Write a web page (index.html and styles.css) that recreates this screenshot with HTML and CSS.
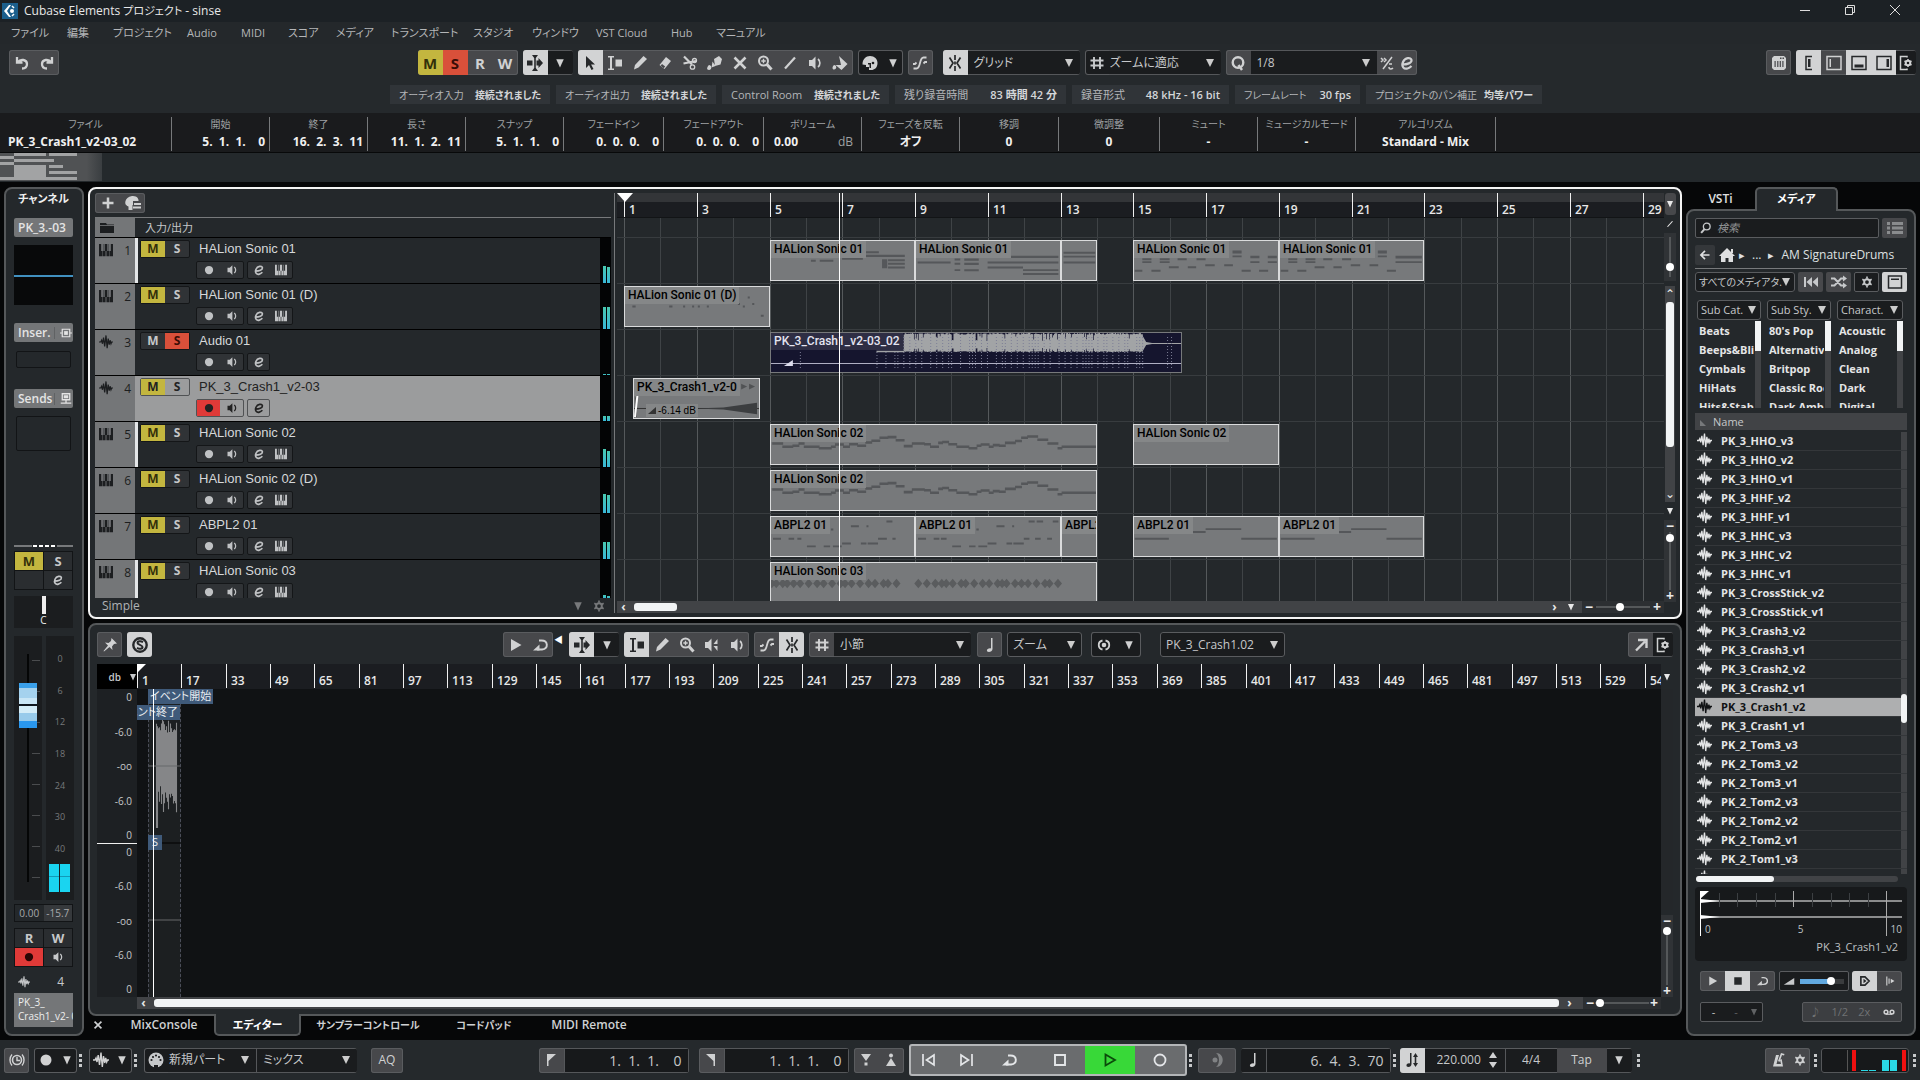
FILE: index.html
```html
<!DOCTYPE html>
<html lang="ja">
<head>
    <meta charset="UTF-8">
    <meta name="viewport" content="width=device-width, initial-scale=1.0">
    <title>Cubase Elements プロジェクト - sinse</title>
    <link rel="stylesheet" href="styles.css">
</head>
<body>
    <!-- Icon sprite -->
    <svg class="sprite" aria-hidden="true">
        <symbol id="i-logo" viewBox="0 0 16 16"><rect width="16" height="16" fill="#1c5f8c"/><path d="M7 2 2 8l5 6h2L5 8l4-6z" fill="#fff"/><circle cx="10" cy="8" r="2" fill="#fff"/><path d="M10 3l2 2M10 13l2-2" stroke="#fff" stroke-width="1.500"/></symbol>
        <symbol id="i-undo" viewBox="0 0 16 16"><path d="M3 2v5.500h5.500M4 7C6.500 3.500 13 4.500 13 9c0 3-2 4.500-5 4.500" fill="none" stroke="currentColor" stroke-width="2.300"/></symbol>
        <symbol id="i-redo" viewBox="0 0 16 16"><path d="M13 2v5.500H7.500M12 7C9.500 3.500 3 4.500 3 9c0 3 2 4.500 5 4.500" fill="none" stroke="currentColor" stroke-width="2.300"/></symbol>
        <symbol id="i-auto" viewBox="0 0 16 16"><path d="M0 5.500h5.500v5H0zM5 0h6L8.800 3v10L11 16H5l2.200-3V3zM9.500 5.500h2V3L16 8l-4.500 5v-2.500h-2z"/></symbol>
        <symbol id="i-arrow" viewBox="0 0 16 16"><path d="M4 1v12l3-3 2.500 5 2-1-2.400-4.500H13z"/></symbol>
        <symbol id="i-range" viewBox="0 0 16 16"><path d="M1 1h6v1.500H5v11h2V15H1v-1.500h2v-11H1zM8.500 4.500H15v7H8.500z"/></symbol>
        <symbol id="i-pencil" viewBox="0 0 16 16"><path d="M2 14.500l1-4.500L11.500 1 15 4 6.500 12.500z"/></symbol>
        <symbol id="i-eraser" viewBox="0 0 16 16"><path d="M9 2l5 4-6.500 8-5-4z"/><path d="M5 9l3.200 2.600-1.500 1.700-3-2.500z" fill="#47484b"/></symbol>
        <symbol id="i-cut" viewBox="0 0 16 16"><path d="M2 1.500l8 8M1.500 8.500L14 6" stroke="currentColor" stroke-width="2.200"/><circle cx="12.500" cy="5.500" r="2" fill="none" stroke="currentColor" stroke-width="1.300"/><circle cx="10.500" cy="12" r="2.200" fill="none" stroke="currentColor" stroke-width="1.300"/></symbol>
        <symbol id="i-glue" viewBox="0 0 16 16"><path d="M7 4l5-3 3 3-1.500 5.500L8 11zM5.500 6.500l3 4.500-4 1.500zM2 10c3 0 3 5 0 5s-2-3 0-5z"/></symbol>
        <symbol id="i-x" viewBox="0 0 16 16"><path d="M2.500 2.500l11 11M13.500 2.500l-11 11" stroke="currentColor" stroke-width="2.600"/></symbol>
        <symbol id="i-zoom" viewBox="0 0 16 16"><circle cx="6.500" cy="6" r="4.500" fill="none" stroke="currentColor" stroke-width="2"/><path d="M10 9.500l4.500 5" stroke="currentColor" stroke-width="3"/><path d="M6.500 3.800v4.400M4.300 6h4.400" stroke="currentColor" stroke-width="1.400"/></symbol>
        <symbol id="i-search" viewBox="0 0 16 16"><circle cx="9" cy="6" r="4.500" fill="none" stroke="currentColor" stroke-width="1.800"/><path d="M6 9.500l-4.500 5" stroke="currentColor" stroke-width="2.800"/></symbol>
        <symbol id="i-line" viewBox="0 0 16 16"><path d="M3 13.500L13 2.500" stroke="currentColor" stroke-width="2.200"/></symbol>
        <symbol id="i-speaker" viewBox="0 0 16 16"><path d="M2 5h3l3.500-3.500v13L5 11H2z"/><path d="M11 4c2.500 2 2.500 6 0 8" fill="none" stroke="currentColor" stroke-width="1.700"/></symbol>
        <symbol id="i-scrub" viewBox="0 0 16 16"><path d="M1 5h3l3.500-3.500v13L4 11H1zM9.500 7l4-5v5zM9.500 9h4v5z"/></symbol>
        <symbol id="i-bucket" viewBox="0 0 16 16"><path d="M7 1l8.500 8-6 6-6-5H9zM2 10c3 0 3 4.500 0 4.500-2 0-2-2.500 0-4.500z"/></symbol>
        <symbol id="i-palette" viewBox="0 0 16 16"><path d="M8 1c4.500 0 7.500 3 7.500 7 0 5-3.500 7-6 7H7v-3H4v-2L.500 9.500C.500 4 4 1 8 1z"/><path d="M6 8h3v5H7.500V9.500H6z" fill="#1c1d1f"/><circle cx="11" cy="8" r="1.300" fill="#1c1d1f"/></symbol>
        <symbol id="i-fade" viewBox="0 0 16 16"><path d="M1.500 13.500h3c4.500 0 2.500-11 7-11h3M1 9h2l1.500-1.500M11.500 8.500L13 7h2" fill="none" stroke="currentColor" stroke-width="1.800"/></symbol>
        <symbol id="i-snap" viewBox="0 0 16 16"><path d="M8 0v5M8 11v5M8 6.500v3M2.500 2.500L6 8l-3.500 5.500M13.500 2.500L10 8l3.500 5.500" fill="none" stroke="currentColor" stroke-width="1.700"/></symbol>
        <symbol id="i-hash" viewBox="0 0 16 16"><path d="M5 2v12M11 2v12M1.500 5.500h13M1.500 10.500h13" stroke="currentColor" stroke-width="1.900"/></symbol>
        <symbol id="i-q" viewBox="0 0 16 16"><circle cx="8" cy="7.500" r="5.300" fill="none" stroke="currentColor" stroke-width="2.400"/><path d="M8.500 10l3.500 5" stroke="currentColor" stroke-width="2.400"/></symbol>
        <symbol id="i-iter" viewBox="0 0 16 16"><path d="M13 2L4 14M2 3l2 2-2 2M5 3l2 2-2 2M10 9h3M10 12c0 3 3 2 4 1" fill="none" stroke="currentColor" stroke-width="1.500"/></symbol>
        <symbol id="i-e" viewBox="0 0 16 16"><path d="M3.500 9.500C8 9.500 13 8 12.500 5 12 2 6 2.500 4 7s1 7.500 4.500 6.500c2-.5 3-1.500 4-2.500" fill="none" stroke="currentColor" stroke-width="2.200"/></symbol>
        <symbol id="i-mixer" viewBox="0 0 16 16"><path d="M3 1h10l2 2v10l-2 2H3l-2-2V3zM3.500 6v6h1.200V6zM6.200 6v6h1.200V6zM8.700 6v6h1.200V6zM11.300 6v6h1.200V6zM9 2.500V4h1.500V2.500zM11.500 2.500V4H13V2.500z" fill-rule="evenodd"/></symbol>
        <symbol id="i-zl" viewBox="0 0 16 16"><path d="M11 1.500H5v13h6" fill="none" stroke="currentColor" stroke-width="1.500"/><path d="M7 4h2.500v8H7z"/></symbol>
        <symbol id="i-zi" viewBox="0 0 16 16"><path d="M1 1.500h14v13H1z" fill="none" stroke="currentColor" stroke-width="1.500"/><path d="M3.500 4H5v8H3.500z"/></symbol>
        <symbol id="i-zb" viewBox="0 0 16 16"><path d="M1 1.500h14v13H1z" fill="none" stroke="currentColor" stroke-width="1.500"/><path d="M3.500 9.500h9v3h-9z"/></symbol>
        <symbol id="i-zr" viewBox="0 0 16 16"><path d="M1 1.500h14v13H1z" fill="none" stroke="currentColor" stroke-width="1.500"/><path d="M10.500 4H13v8h-2.500z"/></symbol>
        <symbol id="i-win" viewBox="0 0 16 16"><path d="M1.500 2h13v12h-13z" fill="none" stroke="currentColor" stroke-width="1.500"/><path d="M4 4.500h8V6H4z"/></symbol>
        <symbol id="i-gear" viewBox="0 0 16 16"><circle cx="8" cy="8" r="3.800" fill="none" stroke="currentColor" stroke-width="2.600"/><path d="M8 .800v3M8 12.200v3M1.800 4.400l2.600 1.500M11.600 10.100l2.600 1.500M1.800 11.600l2.600-1.500M11.600 5.900l2.600-1.500" stroke="currentColor" stroke-width="2.200"/></symbol>
        <symbol id="i-setup" viewBox="0 0 16 16"><path d="M9 2.500V1.500H2.500v13H9v-1" fill="none" stroke="currentColor" stroke-width="1.500"/><circle cx="10" cy="8" r="2.300" fill="none" stroke="currentColor" stroke-width="2"/><path d="M10 4v2M10 10v2M6.500 6l1.700 1M11.800 9l1.700 1M6.500 10l1.700-1M11.800 7l1.700-1" stroke="currentColor" stroke-width="1.500"/></symbol>
        <symbol id="i-piano" viewBox="0 0 16 16"><path d="M0 1h2.500v8H4v6H0zM4.500 1H5v8h1.500V1h3v8H11V1h.5v14h-3V9h-1v6h-3zM13.500 1H16v14h-4V9h1.500z"/></symbol>
        <symbol id="i-wave" viewBox="0 0 16 16"><path d="M0 8h2l1-2 1 4 1.200-7L6.500 13 8 .500 9.300 15 10.500 4l1.200 7 1-5 1 4 .8-2H16" fill="none" stroke="currentColor" stroke-width="1.400"/></symbol>
        <symbol id="i-folder" viewBox="0 0 16 16"><path d="M1 3h6l1 1.500h7V13H1z"/><path d="M1 5.500h14" stroke="#66686a"/></symbol>
        <symbol id="i-rec" viewBox="0 0 16 16"><circle cx="8" cy="8" r="5.500"/></symbol>
        <symbol id="i-plus" viewBox="0 0 16 16"><path d="M8 2.500v11M2.500 8h11" stroke="currentColor" stroke-width="2.500"/></symbol>
        <symbol id="i-agent" viewBox="0 0 16 16"><path d="M7 1c5-.5 7 3 6.500 5H8v4h-.5v5H3.500v-3.500C0 10 0 8 .500 6S3 1.500 7 1z"/><path d="M9 8h7v2H9zM8 11.500h8v2H8z"/></symbol>
        <symbol id="i-pin" viewBox="0 0 16 16"><path d="M9.500 1l5.500 5.500-3 .5-2 2.500.5 3.500-3-3L2 14.500 1.500 14 6 8.500l-3-3 3.500.5L9 4z"/></symbol>
        <symbol id="i-solo" viewBox="0 0 16 16"><circle cx="8" cy="8" r="6.700" fill="none" stroke="currentColor" stroke-width="2.400"/><path d="M11 5.300C9 3.800 5.500 4 5.500 6s5 1.700 5 4-3.500 2.200-5.500.7" fill="none" stroke="currentColor" stroke-width="2"/></symbol>
        <symbol id="i-note" viewBox="0 0 16 16"><path d="M9 1h1.500v11c0 2-2 3-3.500 3s-2.500-1-2-2 2-2 4-1.500z"/></symbol>
        <symbol id="i-eye" viewBox="0 0 16 16"><path d="M6.500 3.500c-5 1-5 8 0 9M9.500 3.500c5 1 5 8 0 9" fill="none" stroke="currentColor" stroke-width="1.800"/><circle cx="8" cy="8" r="2.300"/></symbol>
        <symbol id="i-play" viewBox="0 0 16 16"><path d="M3 2l10.500 6L3 14z"/></symbol>
        <symbol id="i-playo" viewBox="0 0 16 16"><path d="M3.500 2.500l9.500 5.500-9.500 5.500z" fill="none" stroke="currentColor" stroke-width="1.800"/></symbol>
        <symbol id="i-cycle" viewBox="0 0 16 16"><path d="M4 12.500h5c7-1 6-9-.5-9H6" fill="none" stroke="currentColor" stroke-width="1.900"/><path d="M0 13.500L6.500 7.500v6z"/></symbol>
        <symbol id="i-prev" viewBox="0 0 16 16"><path d="M2 2v12M13 3L5.500 8l7.500 5z" fill="none" stroke="currentColor" stroke-width="1.700"/></symbol>
        <symbol id="i-next" viewBox="0 0 16 16"><path d="M14 2v12M3 3l7.500 5L3 13z" fill="none" stroke="currentColor" stroke-width="1.700"/></symbol>
        <symbol id="i-stopo" viewBox="0 0 16 16"><path d="M3 3h10v10H3z" fill="none" stroke="currentColor" stroke-width="1.900"/></symbol>
        <symbol id="i-stop" viewBox="0 0 16 16"><path d="M3 3h10v10H3z"/></symbol>
        <symbol id="i-reco" viewBox="0 0 16 16"><circle cx="8" cy="8" r="5.500" fill="none" stroke="currentColor" stroke-width="1.800"/></symbol>
        <symbol id="i-locl" viewBox="0 0 16 16"><path d="M4 2h9L5.500 9v5H4z"/></symbol>
        <symbol id="i-locr" viewBox="0 0 16 16"><path d="M12 2H3l7.500 7v5H12z"/></symbol>
        <symbol id="i-pin1" viewBox="0 0 16 16"><path d="M3 2h10L8 9zM6.500 10.500h3v3h-3z"/></symbol>
        <symbol id="i-pin2" viewBox="0 0 16 16"><path d="M3 14h10L8 6z"/><circle cx="8" cy="3.500" r="2"/></symbol>
        <symbol id="i-clock" viewBox="0 0 16 16"><circle cx="8" cy="8" r="4.500" fill="none" stroke="currentColor" stroke-width="1.600"/><path d="M8 5v3.500h3M3 2.500C.3 5.500.3 10.500 3 13.500M13 2.500c2.700 3 2.700 8 0 11" fill="none" stroke="currentColor" stroke-width="1.400"/></symbol>
        <symbol id="i-midi" viewBox="0 0 16 16"><circle cx="8" cy="8" r="7.500"/><g fill="#1c1d1f"><circle cx="3.500" cy="8" r="1.100"/><circle cx="5" cy="5" r="1.100"/><circle cx="8" cy="3.500" r="1.100"/><circle cx="11" cy="5" r="1.100"/><circle cx="12.500" cy="8" r="1.100"/><path d="M6 13h4v3H6z"/></g></symbol>
        <symbol id="i-ring" viewBox="0 0 16 16"><path d="M7 1c9 0 9 14 0 14 4-3 4-11 0-14z"/><circle cx="6" cy="8" r="2.500"/></symbol>
        <symbol id="i-tempo" viewBox="0 0 16 16"><path d="M6 1h1.500v11c0 2-1.500 3-3 3s-2.300-1-2-2 1.500-2 3.500-1.500zM11.500 1L14 5h-1.700v6H14l-2.500 4L9 11h1.700V5H9z"/></symbol>
        <symbol id="i-metro" viewBox="0 0 16 16"><path d="M6 3h3L6.500 12H11l-1-4 1.700-1L13 14.500H3zM8 9l3-8 3.500 1-.5 1.500-2-.5L9.500 10z"/></symbol>
        <symbol id="i-list" viewBox="0 0 16 16"><path d="M0 2h3v3H0zM5 2h11v3H5zM0 6.500h3v3H0zM5 6.500h11v3H5zM0 11h3v3H0zM5 11h11v3H5z"/></symbol>
        <symbol id="i-back" viewBox="0 0 16 16"><path d="M14 8H3M8 2.500L2.500 8 8 13.500" fill="none" stroke="currentColor" stroke-width="2.200"/></symbol>
        <symbol id="i-home" viewBox="0 0 16 16"><path d="M8 1l8 8h-2v6H9.500v-4h-3v4H2V9H0z"/><path d="M12 2h2v4h-2z"/></symbol>
        <symbol id="i-rewind" viewBox="0 0 16 16"><path d="M1 3h2v10H1zM9 3v10L3.500 8zM15 3v10L9.500 8z"/></symbol>
        <symbol id="i-shuffle" viewBox="0 0 16 16"><path d="M0 4.500h3.500L10 11.500h3M0 11.500h3.500L10 4.500h3" fill="none" stroke="currentColor" stroke-width="2"/><path d="M12 1.500L16 4.500l-4 3zM12 8.500l4 3-4 3z"/></symbol>
        <symbol id="i-ramp" viewBox="0 0 16 16"><path d="M1 13L15 4v9z"/></symbol>
        <symbol id="i-dtrig" viewBox="0 0 16 16"><path d="M2.500 2.500H8L13.500 8 8 13.500H2.500z" fill="none" stroke="currentColor" stroke-width="2.200"/><path d="M6 5l4 3-4 3z"/></symbol>
        <symbol id="i-bars" viewBox="0 0 16 16"><path d="M3 2h1.500v12H3zM6 4.500h1.500v7H6zM9 5v6l5-3z"/></symbol>
        <symbol id="i-tape" viewBox="0 0 16 16"><circle cx="4" cy="8" r="2.500" fill="none" stroke="currentColor" stroke-width="2"/><circle cx="12" cy="8" r="2.500" fill="none" stroke="currentColor" stroke-width="2"/><path d="M4 11h8" stroke="currentColor" stroke-width="1.500"/></symbol>
        <symbol id="i-insert" viewBox="0 0 16 16"><path d="M3 3h10v10H3zM0 8h3M13 8h3" fill="none" stroke="currentColor" stroke-width="1.600"/><path d="M5.500 5.500h5v5h-5z"/></symbol>
        <symbol id="i-send" viewBox="0 0 16 16"><path d="M3 1h10v8H3zM8 9v5M1 13.500h14" fill="none" stroke="currentColor" stroke-width="1.700"/><path d="M5 3h6v4H5z"/></symbol>
        <symbol id="i-open" viewBox="0 0 16 16"><path d="M3 13.500L12 4.500M5 3h8.500v8" fill="none" stroke="currentColor" stroke-width="2.400"/></symbol>
        <symbol id="i-caret" viewBox="0 0 16 16"><path d="M2 2h12L8 15z"/></symbol>
    </svg>

    <header class="titlebar">
        <svg class="icon"><use href="#i-logo"/></svg>
        <span class="titlebar-text">Cubase Elements <span class="kana">プロジェクト</span> - sinse</span>
        <div class="window-buttons">
            <button aria-label="最小化"><svg viewBox="0 0 10 10"><path d="M0 5.500h10"/></svg></button>
            <button aria-label="元に戻す"><svg viewBox="0 0 10 10"><path d="M.5 2.500h7v7h-7zM2.500 2.500v-2h7v7h-2"/></svg></button>
            <button aria-label="閉じる"><svg viewBox="0 0 10 10"><path d="M0 0l10 10M10 0L0 10"/></svg></button>
        </div>
    </header>

    <nav class="menubar">
        <a href="#">ファイル</a><a href="#">編集</a><a href="#">プロジェクト</a><a href="#">Audio</a><a href="#">MIDI</a><a href="#">スコア</a><a href="#">メディア</a><a href="#">トランスポート</a><a href="#">スタジオ</a><a href="#">ウィンドウ</a><a href="#">VST Cloud</a><a href="#">Hub</a><a href="#">マニュアル</a>
    </nav>

    <div class="toolbar">
        <div class="group">
            <button class="btn" aria-label="元に戻す"><svg class="icon"><use href="#i-undo"/></svg></button>
            <button class="btn" aria-label="再実行"><svg class="icon"><use href="#i-redo"/></svg></button>
        </div>
        <div class="toolbar-center">
            <div class="group">
                <button class="btn letter yellow">M</button><button class="btn letter red">S</button><button class="btn letter">R</button><button class="btn letter">W</button>
            </div>
            <div class="group">
                <button class="btn on" aria-label="オートスクロール"><svg class="icon"><use href="#i-auto"/></svg></button>
                <button class="btn dark" aria-label="オートスクロール設定"><svg class="icon small"><use href="#i-caret"/></svg></button>
            </div>
            <div class="group">
                <button class="btn on" aria-label="選択"><svg class="icon"><use href="#i-arrow"/></svg></button>
                <button class="btn" aria-label="範囲"><svg class="icon"><use href="#i-range"/></svg></button>
                <button class="btn" aria-label="鉛筆"><svg class="icon"><use href="#i-pencil"/></svg></button>
                <button class="btn" aria-label="消しゴム"><svg class="icon"><use href="#i-eraser"/></svg></button>
                <button class="btn" aria-label="はさみ"><svg class="icon"><use href="#i-cut"/></svg></button>
                <button class="btn" aria-label="のり"><svg class="icon"><use href="#i-glue"/></svg></button>
                <button class="btn" aria-label="ミュート"><svg class="icon"><use href="#i-x"/></svg></button>
                <button class="btn" aria-label="ズーム"><svg class="icon"><use href="#i-zoom"/></svg></button>
                <button class="btn" aria-label="ライン"><svg class="icon"><use href="#i-line"/></svg></button>
                <button class="btn" aria-label="再生"><svg class="icon"><use href="#i-speaker"/></svg></button>
                <button class="btn" aria-label="カラー"><svg class="icon"><use href="#i-bucket"/></svg></button>
            </div>
            <div class="group dark palette">
                <button class="btn dark" aria-label="パレット"><svg class="icon"><use href="#i-palette"/></svg></button>
                <button class="btn dark narrow" aria-label="パレットメニュー"><svg class="icon small"><use href="#i-caret"/></svg></button>
            </div>
            <div class="group"><button class="btn" aria-label="クロスフェード"><svg class="icon"><use href="#i-fade"/></svg></button></div>
            <div class="group snap">
                <button class="btn on" aria-label="スナップ"><svg class="icon"><use href="#i-snap"/></svg></button>
                <select class="select w112" aria-label="スナップタイプ"><option>グリッド</option></select>
            </div>
            <div class="group dark">
                <svg class="icon lead"><use href="#i-hash"/></svg>
                <select class="select w112 tight" aria-label="グリッドの種類"><option>ズームに適応</option></select>
            </div>
            <div class="group">
                <button class="btn" aria-label="クオンタイズ"><svg class="icon"><use href="#i-q"/></svg></button>
                <select class="select w126" aria-label="クオンタイズ値"><option>1/8</option></select>
                <button class="btn narrow" aria-label="反復"><svg class="icon"><use href="#i-iter"/></svg></button>
                <button class="btn narrow" aria-label="編集"><svg class="icon"><use href="#i-e"/></svg></button>
            </div>
        </div>
        <div class="toolbar-right">
            <div class="group"><button class="btn" aria-label="キーボード"><svg class="icon"><use href="#i-mixer"/></svg></button></div>
            <div class="group">
                <button class="btn on" aria-label="左ゾーン"><svg class="icon"><use href="#i-zl"/></svg></button>
                <button class="btn" aria-label="インスペクター"><svg class="icon"><use href="#i-zi"/></svg></button>
                <button class="btn on" aria-label="下ゾーン"><svg class="icon"><use href="#i-zb"/></svg></button>
                <button class="btn on" aria-label="右ゾーン"><svg class="icon"><use href="#i-zr"/></svg></button>
                <button class="btn dark narrow" aria-label="設定"><svg class="icon"><use href="#i-setup"/></svg></button>
            </div>
        </div>
    </div>

    <div class="pills">
        <div class="pill"><span class="kana">オーディオ入力</span><b class="kana">接続されました</b></div>
        <div class="pill"><span class="kana">オーディオ出力</span><b class="kana">接続されました</b></div>
        <div class="pill"><span>Control Room</span><b class="kana">接続されました</b></div>
        <div class="pill"><span>残り録音時間</span><b>83 時間 42 分</b></div>
        <div class="pill"><span>録音形式</span><b>48 kHz - 16 bit</b></div>
        <div class="pill"><span class="kana">フレームレート</span><b>30 fps</b></div>
        <div class="pill"><span class="kana">プロジェクトのパン補正</span><b class="kana">均等パワー</b></div>
    </div>

    <div class="infoline">
        <div class="info left"><span>ファイル</span><b>PK_3_Crash1_v2-03_02</b></div>
        <div class="info right"><span>開始</span><b>5.  1.  1.    0</b></div>
        <div class="info right"><span>終了</span><b>16.  2.  3.  11</b></div>
        <div class="info right"><span>長さ</span><b>11.  1.  2.  11</b></div>
        <div class="info right"><span>スナップ</span><b>5.  1.  1.    0</b></div>
        <div class="info right"><span>フェードイン</span><b>0.  0.  0.    0</b></div>
        <div class="info right"><span>フェードアウト</span><b>0.  0.  0.    0</b></div>
        <div class="info unit"><span>ボリューム</span><b>0.00 <i>dB</i></b></div>
        <div class="info"><span>フェーズを反転</span><b>オフ</b></div>
        <div class="info"><span>移調</span><b>0</b></div>
        <div class="info"><span>微調整</span><b>0</b></div>
        <div class="info"><span>ミュート</span><b>-</b></div>
        <div class="info"><span>ミュージカルモード</span><b>-</b></div>
        <div class="info"><span>アルゴリズム</span><b>Standard - Mix</b></div>
    </div>

    <div class="overview">
        <svg width="102" height="28" viewBox="0 0 102 28" fill="#a2a3a4">
            <defs><linearGradient id="view"><stop offset=".85" stop-color="#505254"/><stop offset="1" stop-color="#3a3e41"/></linearGradient></defs>
            <rect width="102" height="28" fill="url(#view)"/>
            <path d="M14 0h32v3H14zM49 0h28v3H49zM0 3h14v3H0zM14 6h40v3H14zM0 9h14v3H0zM14 12h32v12H14zM49 12h14v3H49zM49 18h28v3H49zM0 24h77v3H0z"/>
        </svg>
    </div>

    <main class="workspace">
        <!-- Channel strip -->
        <aside class="panel channel">
            <h2>チャンネル</h2>
            <div class="ch-button">PK_3.-03</div>
            <div class="eq"></div>
            <button class="ch-button split">Inser.<svg class="icon tiny"><use href="#i-insert"/></svg></button>
            <div class="slot"></div>
            <button class="ch-button split">Sends<svg class="icon tiny"><use href="#i-send"/></svg></button>
            <div class="slot tall"></div>
            <div class="dashes"></div>
            <div class="quad">
                <button class="yellow">M</button><button>S</button>
                <button aria-label="バイパス"></button><button aria-label="編集"><svg class="icon tiny"><use href="#i-e"/></svg></button>
            </div>
            <div class="pan"><i></i>C</div>
            <div class="fader-area">
                <div class="fader-box">
                    <input type="range" class="fader" min="0" max="100" value="84" aria-label="ボリューム">
                </div>
                <div class="meter-box">
                    <span>0</span><span>6</span><span>12</span><span>18</span><span>24</span><span>30</span><span>40</span>
                    <div class="level"><i></i><i></i></div>
                </div>
            </div>
            <div class="values"><span>0.00</span><span>-15.7</span></div>
            <div class="quad">
                <button>R</button><button>W</button>
                <button class="record" aria-label="録音可能"><svg class="icon tiny"><use href="#i-rec"/></svg></button><button aria-label="モニター"><svg class="icon tiny"><use href="#i-speaker"/></svg></button>
            </div>
            <div class="ch-number"><svg class="icon tiny"><use href="#i-wave"/></svg><span>4</span></div>
            <div class="ch-name">PK_3_<br>Crash1_v2- 0</div>
        </aside>

        <div class="center">
            <!-- Project window -->
            <section class="panel project">
                <div class="tracklist">
                    <div class="tracklist-head">
                        <div class="group low">
                            <button class="btn" aria-label="トラックを追加"><svg class="icon"><use href="#i-plus"/></svg></button>
                            <button class="btn" aria-label="表示設定"><svg class="icon"><use href="#i-agent"/></svg></button>
                        </div>
                    </div>
                    <div class="folder"><svg class="icon"><use href="#i-folder"/></svg><span>入力/出力</span></div>
                    <div class="tracks" id="tracks"></div>
                    <div class="tracklist-foot"><span>Simple</span><svg class="icon small"><use href="#i-caret"/></svg><svg class="icon tiny"><use href="#i-gear"/></svg></div>
                </div>
                <div class="splitter"></div>
                <div class="arrange">
                    <div class="ruler" id="ruler"></div>
                    <div class="canvas" id="canvas"></div>
                    <div class="playhead"></div>
                    <div class="hscroll">
                        <span class="chev">‹</span><div class="scroll-track"><i class="scroll-thumb"></i></div><span class="chev">›</span>
                        <svg class="icon micro"><use href="#i-caret"/></svg>
                        <label class="zoomer">−<input type="range" min="0" max="100" value="44" aria-label="横ズーム">+</label>
                    </div>
                </div>
                <div class="side-scroll">
                    <button class="side-btn" aria-label="ルーラー"><svg class="icon micro"><use href="#i-caret"/></svg></button>
                    <svg class="icon micro"><use href="#i-line"/></svg>
                    <label class="vzoom short"><input type="range" min="0" max="100" value="20" aria-label="波形ズーム"></label>
                    <div class="vscroll"><span>⌃</span><i></i><span class="down">⌄</span></div>
                    <svg class="icon micro"><use href="#i-caret"/></svg>
                    <label class="vzoom">−<input type="range" min="0" max="100" value="96" aria-label="縦ズーム">+</label>
                </div>
            </section>

            <!-- Sample editor -->
            <section class="panel editor">
                <div class="editor-bar">
                    <div class="editor-left">
                        <div class="group"><button class="btn" aria-label="固定"><svg class="icon"><use href="#i-pin"/></svg></button></div>
                        <div class="group"><button class="btn on" aria-label="ソロ"><svg class="icon"><use href="#i-solo"/></svg></button></div>
                    </div>
                    <div class="editor-tools">
                        <div class="group">
                            <button class="btn" aria-label="再生"><svg class="icon"><use href="#i-play"/></svg></button>
                            <button class="btn" aria-label="ループ"><svg class="icon"><use href="#i-cycle"/></svg></button>
                        </div>
                        <span class="tri">◀</span>
                        <div class="group">
                            <button class="btn on" aria-label="オートスクロール"><svg class="icon"><use href="#i-auto"/></svg></button>
                            <button class="btn dark" aria-label="設定"><svg class="icon small"><use href="#i-caret"/></svg></button>
                        </div>
                        <div class="group">
                            <button class="btn on" aria-label="範囲"><svg class="icon"><use href="#i-range"/></svg></button>
                            <button class="btn" aria-label="鉛筆"><svg class="icon"><use href="#i-pencil"/></svg></button>
                            <button class="btn" aria-label="ズーム"><svg class="icon"><use href="#i-zoom"/></svg></button>
                            <button class="btn" aria-label="スクラブ"><svg class="icon"><use href="#i-scrub"/></svg></button>
                            <button class="btn" aria-label="試聴"><svg class="icon"><use href="#i-speaker"/></svg></button>
                        </div>
                        <div class="group">
                            <button class="btn" aria-label="ゼロクロス"><svg class="icon"><use href="#i-fade"/></svg></button>
                            <button class="btn on" aria-label="スナップ"><svg class="icon"><use href="#i-snap"/></svg></button>
                        </div>
                        <div class="group">
                            <span class="btn"><svg class="icon"><use href="#i-hash"/></svg></span>
                            <select class="select w137" aria-label="グリッド"><option>小節</option></select>
                        </div>
                        <div class="group note"><button class="btn" aria-label="音符"><svg class="icon"><use href="#i-note"/></svg></button></div>
                        <select class="select framed w75" aria-label="ズーム"><option>ズーム</option></select>
                        <div class="group dark eye">
                            <button class="btn dark" aria-label="表示"><svg class="icon"><use href="#i-eye"/></svg></button>
                            <button class="btn dark" aria-label="表示メニュー"><svg class="icon small"><use href="#i-caret"/></svg></button>
                        </div>
                        <select class="select framed w125" aria-label="クリップ"><option>PK_3_Crash1.02</option></select>
                    </div>
                    <div class="group">
                        <button class="btn" aria-label="別ウィンドウ"><svg class="icon"><use href="#i-open"/></svg></button>
                        <button class="btn dark narrow" aria-label="設定"><svg class="icon"><use href="#i-setup"/></svg></button>
                    </div>
                </div>
                <div class="editor-grid">
                    <div class="db">db <svg class="icon micro"><use href="#i-caret"/></svg></div>
                    <div class="ruler plain" id="editor-ruler"></div>
                    <div class="side-scroll cap"><svg class="icon micro"><use href="#i-caret"/></svg></div>
                    <div class="scale">
                        <div><span>0</span><span>-6.0</span><span>-oo</span><span>-6.0</span><span>0</span></div>
                        <div><span>0</span><span>-6.0</span><span>-oo</span><span>-6.0</span><span>0</span></div>
                    </div>
                    <div class="wave-area">
                        <div class="event" id="event"></div>
                        <span class="flag start">イベント開始</span>
                        <span class="flag end">イベント終了</span>
                        <span class="flag sync">S</span>
                        <i class="cursor"></i>
                    </div>
                    <div class="side-scroll">
                        <div class="vscroll empty"></div>
                        <label class="vzoom">−<input type="range" min="0" max="100" value="100" aria-label="縦ズーム">+</label>
                    </div>
                    <div class="hscroll">
                        <span class="chev">‹</span><div class="scroll-track"><i class="scroll-thumb full"></i></div><span class="chev">›</span>
                        <label class="zoomer">−<input type="range" min="0" max="100" value="2" aria-label="横ズーム">+</label>
                    </div>
                </div>
            </section>

            <nav class="tabs">
                <button aria-label="閉じる"><svg class="icon small"><use href="#i-x"/></svg></button>
                <a href="#">MixConsole</a><a href="#" class="active">エディター</a><a href="#" class="kana">サンプラーコントロール</a><a href="#" class="kana">コードパッド</a><a href="#">MIDI Remote</a>
            </nav>
        </div>

        <!-- Media bay -->
        <aside class="media">
            <nav class="media-tabs"><a href="#">VSTi</a><a href="#" class="active">メディア</a></nav>
            <div class="media-body">
                <div class="search-row">
                    <label class="search"><svg class="icon tiny"><use href="#i-search"/></svg><input type="text" placeholder="検索" aria-label="検索"></label>
                    <button class="mini" aria-label="リスト"><svg class="icon"><use href="#i-list"/></svg></button>
                </div>
                <div class="crumbs">
                    <button class="mini" aria-label="戻る"><svg class="icon tiny"><use href="#i-back"/></svg></button>
                    <svg class="icon"><use href="#i-home"/></svg><i>▸</i><a href="#">...</a><i>▸</i><a href="#">AM SignatureDrums</a>
                </div>
                <div class="filter-row">
                    <select class="select framed" aria-label="メディアタイプ"><option>すべてのメディアタ.</option></select>
                    <button class="mini" aria-label="先頭へ"><svg class="icon"><use href="#i-rewind"/></svg></button>
                    <button class="mini" aria-label="シャッフル"><svg class="icon"><use href="#i-shuffle"/></svg></button>
                    <button class="mini black" aria-label="設定"><svg class="icon tiny"><use href="#i-gear"/></svg></button>
                    <button class="mini on" aria-label="プレビュー"><svg class="icon"><use href="#i-win"/></svg></button>
                </div>
                <div class="attributes">
                    <div>
                        <select class="select framed" aria-label="Sub Category"><option>Sub Cat.</option></select>
                        <ul><li>Beats</li><li>Beeps&amp;Blips</li><li>Cymbals</li><li>HiHats</li><li>Hits&amp;Stabs</li></ul>
                    </div>
                    <div>
                        <select class="select framed" aria-label="Sub Style"><option>Sub Sty.</option></select>
                        <ul><li>80's Pop</li><li>Alternative</li><li>Britpop</li><li>Classic Rock</li><li>Dark Ambient</li></ul>
                    </div>
                    <div>
                        <select class="select framed" aria-label="Character"><option>Charact.</option></select>
                        <ul><li>Acoustic</li><li>Analog</li><li>Clean</li><li>Dark</li><li>Digital</li></ul>
                    </div>
                </div>
                <div class="files">
                    <table>
                        <thead><tr><th><svg viewBox="0 0 8 8"><path d="M0 0l8 8H0z"/></svg>Name</th></tr></thead>
                        <tbody id="files"></tbody>
                    </table>
                    <i class="files-thumb"></i>
                </div>
                <div class="files-scroll"><i></i></div>
                <div class="preview">
                    <svg viewBox="0 0 202 46" preserveAspectRatio="none">
                        <path d="M0 0h9L0 8z" fill="#fff"/>
                        <path d="M.5 0v45M0 10h202M0 26h202" stroke="#fff" fill="none"/>
                        <path d="M93.500 0v16M186.500 0v45" stroke="#aaa"/>
                        <path d="M19.500 2v14M37.500 2v14M56.500 2v14M75.500 2v14M112.500 2v14M131.500 2v14M149.500 2v14M168.500 2v14" stroke="#3c3f42"/>
                        <path d="M0 8l20 2-20 2zM0 24l20 2-20 2z" fill="#fff"/>
                    </svg>
                    <div class="preview-scale"><span>0</span><span>5</span><span>10</span></div>
                    <div class="preview-name">PK_3_Crash1_v2</div>
                </div>
                <div class="preview-controls">
                    <div class="group low">
                        <button class="btn" aria-label="再生"><svg class="icon tiny"><use href="#i-play"/></svg></button>
                        <button class="btn on" aria-label="停止"><svg class="icon tiny"><use href="#i-stop"/></svg></button>
                        <button class="btn" aria-label="ループ"><svg class="icon tiny"><use href="#i-cycle"/></svg></button>
                    </div>
                    <label class="volume"><svg class="icon tiny"><use href="#i-ramp"/></svg><input type="range" min="0" max="100" value="76" aria-label="プレビュー音量"></label>
                    <div class="group low">
                        <button class="btn on" aria-label="自動再生"><svg class="icon tiny"><use href="#i-dtrig"/></svg></button>
                        <button class="btn" aria-label="同期"><svg class="icon tiny"><use href="#i-bars"/></svg></button>
                    </div>
                </div>
                <div class="preview-controls">
                    <div class="pair"><span>-</span><span class="dim">-</span><svg class="icon micro dim"><use href="#i-caret"/></svg></div>
                    <div class="rates"><span>♪</span><span>1/2</span><span>2x</span><svg class="icon tiny"><use href="#i-tape"/></svg></div>
                </div>
            </div>
        </aside>
    </main>

    <footer class="transport">
        <div class="t-left">
            <div class="group"><button class="btn" aria-label="クロック"><svg class="icon"><use href="#i-clock"/></svg></button></div>
            <div class="group dark combo">
                <button class="btn dark" aria-label="録音モード"><svg class="icon"><use href="#i-rec"/></svg></button>
                <button class="btn dark narrow" aria-label="録音モード設定"><svg class="icon small"><use href="#i-caret"/></svg></button>
            </div>
            <span class="dots"></span>
            <div class="group dark combo">
                <button class="btn dark" aria-label="オーディオ"><svg class="icon"><use href="#i-wave"/></svg></button>
                <button class="btn dark narrow" aria-label="オーディオ設定"><svg class="icon small"><use href="#i-caret"/></svg></button>
            </div>
            <span class="dots"></span>
            <div class="group dark">
                <svg class="icon lead"><use href="#i-midi"/></svg>
                <select class="select w88 tight" aria-label="MIDI 録音"><option>新規パート</option></select>
                <select class="select w101 ruled" aria-label="MIDI 録音モード"><option>ミックス</option></select>
            </div>
            <div class="group aq"><button class="btn">AQ</button></div>
        </div>
        <div class="t-center">
            <div class="group locator"><button class="btn" aria-label="左ロケーター"><svg class="icon"><use href="#i-locl"/></svg></button><output>1.  1.  1.    0</output></div>
            <div class="group locator"><button class="btn" aria-label="右ロケーター"><svg class="icon"><use href="#i-locr"/></svg></button><output>1.  1.  1.    0</output></div>
            <div class="group">
                <button class="btn" aria-label="パンチイン"><svg class="icon"><use href="#i-pin1"/></svg></button>
                <button class="btn" aria-label="パンチアウト"><svg class="icon"><use href="#i-pin2"/></svg></button>
            </div>
            <div class="deck">
                <button class="skip" aria-label="前へ"><svg class="icon"><use href="#i-prev"/></svg></button>
                <button class="skip" aria-label="次へ"><svg class="icon"><use href="#i-next"/></svg></button>
                <button aria-label="サイクル"><svg class="icon"><use href="#i-cycle"/></svg></button>
                <button aria-label="停止"><svg class="icon"><use href="#i-stopo"/></svg></button>
                <button class="playing" aria-label="再生"><svg class="icon"><use href="#i-playo"/></svg></button>
                <button aria-label="録音"><svg class="icon"><use href="#i-reco"/></svg></button>
            </div>
            <span class="dots"></span>
            <div class="group precount"><button class="btn" aria-label="プリカウント"><svg class="icon"><use href="#i-ring"/></svg></button></div>
            <div class="group dark position"><button class="btn dark" aria-label="拍"><svg class="icon"><use href="#i-note"/></svg></button><output>6.  4.  3.  70</output></div>
            <span class="dots"></span>
            <div class="group dark">
                <button class="btn on" aria-label="テンポトラック"><svg class="icon"><use href="#i-tempo"/></svg></button>
                <label class="tempo"><input type="text" value="220.000" aria-label="テンポ"><svg viewBox="0 0 8 16"><path d="M4 0l4 6H0zM4 16l4-6H0z"/></svg></label>
                <span class="signature">4/4</span>
                <button class="btn tap">Tap</button>
                <button class="btn dark" aria-label="テンポ設定"><svg class="icon small"><use href="#i-caret"/></svg></button>
            </div>
            <span class="dots"></span>
        </div>
        <div class="t-right">
            <div class="group">
                <button class="btn" aria-label="メトロノーム"><svg class="icon"><use href="#i-metro"/></svg></button>
                <button class="btn narrow" aria-label="メトロノーム設定"><svg class="icon tiny"><use href="#i-gear"/></svg></button>
            </div>
            <span class="dots"></span>
            <svg class="outmeter" viewBox="0 0 88 25">
                <path d="M26.500 2v21" stroke="#555"/>
                <path d="M31 2h4v21h-4zM81 2h4v21h-4z" fill="#f01010"/>
                <path d="M40 22h7v1h-7zM48 22h7v1h-7zM61 12h7v11h-7zM69 12h7v11h-7z" fill="#2ad8e4"/>
            </svg>
            <span class="dots"></span>
        </div>
    </footer>

    <script src="script.js"></script>
</body>
</html>
```
FILE: styles.css
```css
* {
    box-sizing: border-box;
}

body {
    margin: 0;
    height: 100vh;
    display: flex;
    flex-direction: column;
    overflow: hidden;
    background: #060708;
    color: #c6c8ca;
    font-family: "Open Sans", "Noto Sans CJK JP", sans-serif;
    font-size: 12px;
    line-height: 16px;
    font-feature-settings: "palt";
}

a {
    color: inherit;
    text-decoration: none;
}

button, select, input {
    font: inherit;
    color: inherit;
    margin: 0;
    padding: 0;
    border: 0;
    border-radius: 0;
    background: none;
}

h2, ul {
    margin: 0;
    padding: 0;
    list-style: none;
}

.kana {
    font-size: 10px;
}

.sprite {
    position: absolute;
    width: 0;
    height: 0;
}

.icon {
    width: 16px;
    height: 16px;
    flex: none;
    display: block;
    fill: currentColor;
}

.icon.tiny { width: 12px; height: 12px; }
.icon.small { width: 10px; height: 10px; }
.icon.micro { width: 8px; height: 8px; }

/* Title and menus */
.titlebar {
    flex: none;
    height: 22px;
    display: flex;
    align-items: center;
    gap: 6px;
    padding: 0 3px 0 2px;
    background: #1c2125;
    color: #e8e8e8;
    font-size: 12px;
}

.titlebar .kana {
    font-size: 11px;
}

.window-buttons {
    margin-left: auto;
    display: flex;
}

.window-buttons button {
    width: 45px;
    height: 20px;
}

.window-buttons svg {
    width: 10px;
    height: 10px;
    fill: none;
    stroke: #ddd;
}

.menubar {
    flex: none;
    height: 22px;
    display: grid;
    grid-template-columns: 56px 46px 74px 54px 47px 48px 55px 82px 59px 64px 75px 45px 80px;
    align-items: center;
    padding-left: 11px;
    background: #24282b;
    color: #b4b6b8;
    font-size: 11px;
}

/* Toolbar */
.toolbar {
    flex: none;
    height: 41px;
    display: flex;
    align-items: center;
    justify-content: space-between;
    padding: 0 4px 4px 9px;
    background: #25292c;
}

.toolbar-center {
    display: flex;
    gap: 5px;
    margin-left: 9px;
}

.toolbar-right {
    display: flex;
    gap: 5px;
}

.group {
    flex: none;
    width: max-content;
    height: 25px;
    display: flex;
    align-items: center;
    overflow: hidden;
    border-radius: 3px;
    background: #47484b;
    box-shadow: inset 0 0 0 1px #5a5c5f;
}

.group.dark {
    background: #1a1c1e;
}

.group.low {
    height: 20px;
}

.group.snap {
    margin-left: 5px;
}

.group .lead {
    margin-left: 4px;
    margin-right: 4px;
}

.btn {
    width: 25px;
    height: 100%;
    display: flex;
    align-items: center;
    justify-content: center;
    color: #d0d1d2;
}

.btn.letter {
    font-family: "Open Sans", sans-serif;
    font-weight: 700;
    font-size: 15px;
}

.btn.yellow, .quad .yellow, .ms .yellow {
    background: #c3b63f;
    color: #33300a;
}

.btn.red, .ms .red {
    background: #d9503a;
    color: #3a0d06;
}

.btn.on {
    background: #d2d3d4;
    color: #26282a;
}

.btn.dark {
    background: #1a1c1e;
    box-shadow: inset 0 1px #55575a, inset 0 -1px #55575a;
}

.btn.narrow {
    width: 20px;
}

.select {
    appearance: none;
    height: 100%;
    padding: 0 20px 0 6px;
    background: #1a1c1e url("data:image/svg+xml,%3Csvg xmlns='http://www.w3.org/2000/svg' width='8' height='8'%3E%3Cpath d='M0 0h8L4 8z' fill='%23ccc'/%3E%3C/svg%3E") no-repeat right 7px center;
    box-shadow: inset 0 1px #55575a, inset 0 -1px #55575a;
    color: #c6c8ca;
}

.select.tight {
    padding-left: 1px;
}

.select.framed {
    height: 25px;
    border-radius: 3px;
    box-shadow: inset 0 0 0 1px #5a5c5f;
}

.select.ruled { border-left: 1px solid #55575a; }
.w75 { width: 75px; }
.w88 { width: 88px; }
.w101 { width: 101px; }
.w112 { width: 112px; }
.w125 { width: 125px; }
.w126 { width: 126px; }
.w137 { width: 137px; }

/* Status pills */
.pills {
    flex: none;
    height: 28px;
    display: grid;
    grid-template-columns: 160px 160px 167px 171px 157px 125px 176px;
    gap: 6px;
    justify-content: center;
    padding-left: 12px;
    background: #25292c;
    font-size: 11px;
}

.pill {
    height: 19px;
    display: flex;
    align-items: center;
    justify-content: space-between;
    padding: 0 9px;
    background: #303438;
    color: #b4b6b8;
    white-space: nowrap;
}

.pill b {
    font-weight: 600;
    color: #d4d6d8;
}

/* Event info line */
.infoline {
    flex: none;
    height: 40px;
    display: grid;
    grid-template-columns: 172px 98px 98px 98px 98px 100px 100px 98px 98px 99px 101px 98px 98px 140px;
    padding: 4px 0 1px;
    background: #1a1b1d;
    border-bottom: 1px solid #08090a;
}

.info {
    display: flex;
    flex-direction: column;
    align-items: center;
    gap: 3px;
    padding: 0 4px;
    border-right: 1px solid #77797b;
    color: #9fa1a3;
    font-size: 10px;
    line-height: 14px;
}

.info b {
    font-size: 12px;
    line-height: 16px;
    color: #f0f0f0;
    white-space: pre;
}

.info.left b { align-self: flex-start; padding-left: 4px; }
.info.right b { align-self: flex-end; }

.info.unit b {
    width: 100%;
    display: flex;
    justify-content: space-between;
    padding: 0 4px 0 6px;
}

.info i {
    font-style: normal;
    font-weight: 400;
    color: #9fa1a3;
}

.overview {
    flex: none;
    height: 29px;
    background: #24292c;
}

.overview svg {
    display: block;
}

/* Workspace */
.workspace {
    flex: 1;
    min-height: 0;
    display: grid;
    grid-template-columns: 80px minmax(0, 1fr) 230px;
    gap: 4px;
    padding: 5px 4px 4px;
}

.panel {
    border: 2px solid #55585a;
    border-radius: 8px;
    background: #24282b;
    overflow: hidden;
}

/* Channel strip */
.channel {
    display: flex;
    flex-direction: column;
    padding: 2px 9px 7px 8px;
}

.channel h2 {
    height: 16px;
    margin-bottom: 11px;
    text-align: center;
    font-size: 11px;
    color: #f0f0f0;
    white-space: nowrap;
}

.ch-button {
    flex: none;
    height: 19px;
    display: flex;
    align-items: center;
    justify-content: space-between;
    padding: 0 4px;
    background: #747678;
    border-radius: 2px;
    font-weight: 600;
    font-size: 12px;
    color: #e4e4e4;
}

.ch-button.split {
    padding-right: 1px;
}

.ch-button.split .icon {
    width: 18px;
    padding-left: 5px;
    border-left: 1px solid #606264;
}

.eq {
    flex: none;
    height: 60px;
    margin: 8px 0 18px;
    background: linear-gradient(#4190c0, #4190c0) no-repeat 0 30px / 100% 2px, #08090a;
}

.slot {
    flex: none;
    height: 17px;
    margin: 9px 2px 21px;
    border: 1px solid #121416;
    border-radius: 2px;
}

.slot.tall {
    height: 35px;
    margin-top: 8px;
}

.dashes {
    height: 2px;
    margin-top: auto;
    margin-bottom: 4px;
    background: repeating-linear-gradient(90deg, #fff 0 4px, transparent 4px 6px) no-repeat center / 22px 2px, linear-gradient(90deg, #77797b 18px, transparent 18px 43px, #77797b 43px);
}

.quad {
    flex: none;
    display: grid;
    grid-template-columns: 1fr 1fr;
    gap: 1px;
    padding: 1px;
    background: #121416;
}

.quad button {
    height: 18px;
    display: flex;
    align-items: center;
    justify-content: center;
    background: #2a2d30;
    font-weight: 700;
    font-size: 13px;
}

.record {
    color: #2a0605;
}

.quad .record {
    background: #e03a38;
}

.pan {
    flex: none;
    height: 32px;
    margin: 6px 0 8px;
    display: flex;
    flex-direction: column;
    align-items: center;
    background: #1b1d1f;
    font-size: 10px;
    line-height: 12px;
    color: #eee;
}

.pan i {
    width: 4px;
    height: 18px;
    background: #eee;
}

.fader-area {
    flex: none;
    height: 261px;
    display: grid;
    grid-template-columns: 28px 28px;
    gap: 4px;
}

.fader-box {
    padding: 18px 0 14px 2px;
    background: repeating-linear-gradient(#4a4c4e 0 1px, transparent 1px 31px) no-repeat 18px 24px / 8px 218px, #1b1d1f;
}

.fader {
    appearance: none;
    writing-mode: vertical-lr;
    direction: rtl;
    width: 24px;
    height: 228px;
    background: linear-gradient(#050606, #050606) no-repeat center / 2px 100%;
}

.fader::-webkit-slider-thumb {
    appearance: none;
    width: 18px;
    height: 45px;
    background: linear-gradient(#3aa0ea 0 5px, #a5d2ee 5px 15px, #c9e6f6 15px 21px, #101820 21px 23px, #d4edf8 23px 30px, #98cbeb 30px 38px, #2a97ee 38px);
}

.meter-box {
    position: relative;
    display: flex;
    flex-direction: column;
    justify-content: space-between;
    padding: 18px 0 46px;
    background: #1b1d1f;
    font-size: 9px;
    line-height: 10px;
    text-align: center;
    color: #77797b;
}

.level {
    position: absolute;
    left: 3px;
    bottom: 8px;
    display: flex;
    gap: 1px;
}

.level i {
    width: 10px;
    height: 28px;
    background: linear-gradient(#1ad4f0 12px, #129ab8 12px 13px, #1ad4f0 13px);
}

.values {
    flex: none;
    display: grid;
    grid-template-columns: 1fr 1fr;
    margin: 7px 0 6px;
    border: 1px solid #121416;
    font-size: 10px;
    text-align: center;
    color: #a8aaac;
}

.values span:last-child {
    background: #36393c;
}

.ch-number {
    flex: none;
    height: 26px;
    display: flex;
    align-items: center;
    justify-content: space-between;
    padding: 4px 9px 0 4px;
}

.ch-name {
    flex: none;
    height: 34px;
    padding: 2px 0 0 4px;
    overflow: hidden;
    white-space: nowrap;
    background: #747678;
    color: #eee;
    font-size: 10px;
    line-height: 14px;
}

/* Project panel */
.center {
    min-width: 0;
    min-height: 0;
    display: grid;
    grid-template-columns: minmax(0, 1fr);
    grid-template-rows: minmax(0, 436fr) minmax(0, 393fr) 20px;
}

.project {
    min-height: 0;
    display: grid;
    grid-template-columns: 516px 6px minmax(0, 1fr) 12px;
    grid-template-rows: minmax(0, 1fr);
    padding: 4px 4px 0 5px;
    border-color: #f4f4f4;
    margin-bottom: 4px;
}

.tracklist {
    min-height: 0;
    display: flex;
    flex-direction: column;
}

.tracklist-head {
    flex: none;
    height: 25px;
    border-bottom: 1px solid #77797b;
}

.folder {
    flex: none;
    height: 20px;
    display: grid;
    grid-template-columns: 40px 1fr;
    align-items: center;
    border-bottom: 1px solid #000;
    background: linear-gradient(90deg, #747678 40px, transparent 40px);
    font-size: 11px;
}

.folder .icon {
    margin-left: 4px;
    color: #1c1e20;
}

.folder span {
    padding-left: 10px;
}

.tracks {
    flex: 1;
    min-height: 0;
    display: flex;
    flex-direction: column;
    overflow: hidden;
}

.track {
    flex: 0 0 46px;
    display: grid;
    grid-template-columns: 40px 3px 1fr 11px;
    grid-template-rows: minmax(0, 1fr);
    border-bottom: 1px solid #000;
    overflow: hidden;
}

.track:last-child {
    flex: 0 1 46px;
    min-height: 0;
    border-bottom: 0;
}

.track-id {
    display: flex;
    justify-content: space-between;
    padding: 5px 4px 0;
    background: #747678;
    color: #1c1e20;
}

.track-id .icon {
    width: 14px;
    height: 14px;
}

.strip {
    background: #e4e6e8;
}

.strip.none {
    background: none;
}

.track-main {
    padding: 2px 2px 0;
    min-width: 0;
    min-height: 0;
}

.track-row {
    display: flex;
    align-items: center;
    gap: 9px;
}

.track-row + .track-row {
    gap: 3px;
    margin: 3px 0 0 56px;
}

.track-name {
    font-family: "Liberation Sans", sans-serif;
    font-size: 13px;
    line-height: 18px;
    color: #d6d8da;
}

.ms {
    height: 18px;
    display: flex;
    border: 1px solid #141618;
    border-radius: 2px;
    background: #303336;
}

.ms button {
    width: 24px;
    height: 16px;
    display: flex;
    align-items: center;
    justify-content: center;
    font-weight: 700;
    font-size: 12px;
}

.ms.wide button {
    width: 23px;
    color: #c0c2c4;
}

.ms.edit button:first-child {
    width: 21px;
}

.track.selected {
    background: #9b9c9d;
}

.track.selected .track-name, .track.selected .ms button {
    color: #222;
}

.track.selected .ms {
    background: none;
    border-color: #505254;
}

.track.selected .ms .record {
    background: #e03a38;
}

.track-meter {
    display: flex;
    align-items: flex-end;
    gap: 1px;
    padding-left: 3px;
    background: #030405;
}

.track-meter i {
    width: 3px;
    background: linear-gradient(#48c8b0, #38b8d8);
}

.tracklist-foot {
    flex: none;
    height: 19px;
    display: flex;
    align-items: center;
    gap: 10px;
    padding: 0 6px 4px 7px;
    font-size: 12px;
    color: #b0b2b4;
}

.tracklist-foot span {
    flex: 1;
}

.tracklist-foot .icon {
    color: #77797b;
}

.splitter {
    margin-bottom: 4px;
    background: linear-gradient(#77797b, #77797b) no-repeat 3px 0 / 1px 100%;
}

.arrange {
    position: relative;
    min-width: 0;
    min-height: 0;
    display: flex;
    flex-direction: column;
    padding-bottom: 4px;
}

.ruler {
    position: relative;
    flex: none;
    height: 25px;
    overflow: hidden;
    background: linear-gradient(#333538 9px, #1b1d21 9px);
    border-bottom: 1px solid #121416;
}

.ruler.plain {
    background: #1b1d21;
    border-bottom: 0;
}

.ruler span {
    position: absolute;
    top: 0;
    height: 24px;
    padding: 9px 0 0 4px;
    border-left: 1px solid #f0f0f0;
    font-size: 12px;
    line-height: 15px;
    font-weight: 600;
    color: #e8e8e8;
}

.ruler .locator-flag {
    position: absolute;
    top: 0;
    left: 0;
    width: 16px;
    height: 9px;
    background: #fff;
    clip-path: polygon(0 0, 100% 0, 50% 100%);
}

.ruler.plain .locator-flag {
    width: 9px;
    clip-path: polygon(0 0, 100% 0, 0 100%);
}

.canvas {
    position: relative;
    flex: 1;
    min-height: 0;
    overflow: hidden;
}

.grid {
    position: absolute;
    inset: 0;
    width: 100%;
    height: 100%;
}

.clip {
    position: absolute;
    height: 41px;
    overflow: hidden;
    border: 1px solid #dadbdc;
    background: #77797b;
    color: #000;
}

.clip b {
    position: relative;
    display: inline-block;
    height: 17px;
    padding: 0 3px;
    background: #858788;
    font-size: 12px;
    line-height: 16px;
    font-weight: 500;
    font-family: Roboto, "Liberation Sans", sans-serif;
    white-space: nowrap;
}

.clip svg {
    position: absolute;
    inset: 0;
    width: 100%;
    height: 100%;
}

.clip.audio {
    border-color: #77797b;
    background: #15152e;
    color: #e4e4f0;
}

.clip.audio b {
    background: #2e2e44;
}

.clip em {
    position: absolute;
    left: 12px;
    bottom: 1px;
    padding: 0 2px 0 12px;
    background: #858788;
    font-style: normal;
    font-size: 10px;
    line-height: 13px;
    font-family: "Liberation Sans", sans-serif;
}

.clip em::before {
    content: "";
    position: absolute;
    left: 2px;
    top: 3px;
    width: 8px;
    height: 7px;
    background: #333;
    clip-path: polygon(0 100%, 100% 0, 100% 100%);
}

.playhead {
    position: absolute;
    left: 222px;
    top: 0;
    bottom: 16px;
    width: 1px;
    background: #fff;
}

/* Scroll bars */
.hscroll {
    flex: none;
    height: 12px;
    display: flex;
    align-items: center;
    gap: 4px;
    background: #414346;
    color: #e8e8e8;
}

.chev {
    width: 13px;
    text-align: center;
    font-weight: 700;
    line-height: 10px;
}

.scroll-track {
    flex: 1;
    height: 8px;
}

.scroll-thumb {
    display: block;
    width: 43px;
    height: 8px;
    border-radius: 3px;
    background: #f2f4f5;
}

.scroll-thumb.full {
    width: 100%;
}

.hscroll > .icon {
    margin-left: 2px;
}

.zoomer {
    height: 12px;
    display: flex;
    align-items: center;
    gap: 3px;
    padding: 0 3px;
    margin-left: 3px;
    background: #2c2f32;
    font-weight: 700;
    font-size: 14px;
    line-height: 12px;
}

input[type="range"] {
    appearance: none;
}

.zoomer input {
    width: 54px;
    height: 10px;
    background: linear-gradient(#55585a, #55585a) no-repeat center / 100% 2px;
}

.zoomer input::-webkit-slider-thumb, .vzoom input::-webkit-slider-thumb, .volume input::-webkit-slider-thumb {
    appearance: none;
    width: 8px;
    height: 8px;
    border-radius: 50%;
    background: #fff;
}

.side-scroll {
    min-height: 0;
    display: flex;
    flex-direction: column;
    align-items: center;
    gap: 5px;
    color: #e8e8e8;
}

.project .side-scroll {
    padding-bottom: 15px;
}

.side-btn {
    width: 11px;
    height: 22px;
    display: flex;
    align-items: center;
    justify-content: center;
    border-radius: 3px;
    background: #47484b;
}

.side-scroll.cap {
    justify-content: center;
}

.vzoom {
    flex: none;
    width: 12px;
    height: 82px;
    display: flex;
    flex-direction: column;
    align-items: center;
    background: #303336;
    font-weight: 700;
    font-size: 14px;
    line-height: 12px;
}

.vzoom.short {
    height: 48px;
    padding: 4px 0;
}

.vzoom input {
    flex: 1;
    min-height: 0;
    writing-mode: vertical-lr;
    direction: rtl;
    width: 10px;
    background: linear-gradient(#55585a, #55585a) no-repeat center / 2px 100%;
}

.vscroll {
    flex: 1;
    min-height: 0;
    width: 10px;
    display: flex;
    flex-direction: column;
    align-items: center;
    background: #414346;
    line-height: 16px;
}

.vscroll.empty {
    width: 12px;
    background: #24272a;
}

.vscroll i {
    flex: 142 1 0;
    width: 8px;
    border-radius: 3px;
    background: #f2f4f5;
}

.vscroll .down {
    flex: 54 1 0;
    display: flex;
    align-items: flex-end;
}

/* Sample editor */
.editor {
    min-height: 0;
    display: flex;
    flex-direction: column;
    padding: 7px 7px 5px;
}

.editor-bar {
    flex: none;
    height: 25px;
    display: flex;
    justify-content: space-between;
    margin-bottom: 7px;
}

.editor-left, .editor-tools {
    display: flex;
    gap: 5px;
}

.editor-tools {
    margin-left: 8px;
}

.editor-tools .note {
    margin-left: 1px;
}

.editor-tools .eye {
    margin: 0 14px 0 4px;
}

.tri {
    width: 10px;
    margin-left: -4px;
    font-size: 9px;
    color: #fff;
}

.editor-grid {
    flex: 1;
    min-height: 0;
    display: grid;
    grid-template-columns: 40px minmax(0, 1fr) 12px;
    grid-template-rows: 25px minmax(0, 1fr) 12px;
}

.db {
    display: flex;
    align-items: center;
    justify-content: flex-end;
    gap: 8px;
    background: #000;
    font-weight: 600;
    font-size: 10px;
}

.scale {
    min-height: 0;
    display: grid;
    grid-template-rows: 1fr 1fr;
    background: #1d2023;
    text-align: right;
    font-size: 10px;
}

.scale div {
    display: flex;
    flex-direction: column;
    justify-content: space-between;
    padding-right: 5px;
}

.scale div + div {
    border-top: 1px solid #f0f0f0;
}

.wave-area {
    position: relative;
    overflow: hidden;
    background: #101214;
}

.event {
    position: absolute;
    left: 11px;
    top: 0;
    bottom: 0;
    width: 33px;
    background: #1c1f21;
    border: 1px dashed #4a4d58;
    border-width: 0 1px;
}

.event svg {
    display: block;
    width: 100%;
    height: 100%;
}

.flag {
    position: absolute;
    height: 15px;
    padding: 0 2px;
    background: #3f5a7a;
    color: #e8ecf0;
    font-size: 11px;
    line-height: 14px;
    white-space: nowrap;
}

.flag.start { left: 11px; top: 0; }
.flag.end { right: calc(100% - 43px); top: 16px; }
.flag.sync { left: 11px; top: 50%; margin-top: -8px; padding: 0 4px; }

.cursor {
    position: absolute;
    left: 16px;
    top: 0;
    bottom: 0;
    width: 1px;
    background: #fff;
}

.editor .hscroll {
    grid-column: 2;
}

.editor .zoomer {
    gap: 1px;
}

/* Lower zone tabs */
.tabs {
    display: grid;
    grid-template-columns: 21px 100px 87px 134px 98px 112px;
    align-items: center;
    margin-top: -2px;
    padding-left: 5px;
    font-weight: 600;
    font-size: 12px;
    color: #cfd1d3;
}

.tabs a {
    height: 22px;
    line-height: 22px;
    text-align: center;
    white-space: nowrap;
}

.tabs a.active {
    border: 2px solid #55585a;
    border-top: 0;
    border-radius: 0 0 5px 5px;
    background: #24282b;
    color: #fff;
    font-size: 11px;
}

/* Media bay */
.media {
    min-height: 0;
    display: flex;
    flex-direction: column;
}

.media-tabs {
    position: relative;
    z-index: 1;
    flex: none;
    height: 24px;
    margin-bottom: -2px;
    display: grid;
    grid-template-columns: 69px 83px;
    text-align: center;
    line-height: 24px;
    font-weight: 600;
    font-size: 12px;
    color: #e0e0e0;
}

.media-tabs .active {
    border: 2px solid #55585a;
    border-bottom: 0;
    border-radius: 5px 5px 0 0;
    background: #24282b;
    line-height: 20px;
    font-size: 11px;
    color: #fff;
}

.media-body {
    flex: 1;
    min-height: 0;
    display: flex;
    flex-direction: column;
    padding: 7px 7px 12px;
    border: 2px solid #55585a;
    border-radius: 8px;
    background: #24282b;
}

.media-body > * {
    flex: none;
}

.mini {
    width: 25px;
    height: 20px;
    display: flex;
    align-items: center;
    justify-content: center;
    border-radius: 2px;
    background: #47484b;
}

.mini.black { background: #1a1c1e; border: 1px solid #5a5c5f; }
.mini.on { background: #d2d3d4; color: #26282a; }

.search-row, .filter-row {
    display: flex;
    gap: 3px;
}

.search {
    flex: 1;
    height: 20px;
    display: flex;
    align-items: center;
    gap: 5px;
    padding-left: 4px;
    border: 1px solid #5a5c5f;
    border-radius: 2px;
    background: #1a1c1e;
}

.search input {
    width: 100%;
    font-style: italic;
    font-size: 11px;
}

.search input::placeholder {
    color: #909294;
}

.search-row .mini {
    color: #8a8c8e;
}

.crumbs {
    height: 31px;
    display: flex;
    align-items: center;
    gap: 4px;
    margin-bottom: 3px;
    padding-top: 3px;
    border-bottom: 1px solid #77797b;
    color: #dfe0e1;
}

.crumbs .mini {
    width: 20px;
    background: #34373a;
}

.crumbs i {
    width: 6px;
    font-style: normal;
    font-size: 11px;
}

.crumbs i + a {
    padding: 0 3px;
}

.filter-row .select {
    flex: 1;
    min-width: 0;
    height: 20px;
    font-size: 10px;
    background-position: right 5px center;
    padding: 0 4px;
}

.attributes {
    display: grid;
    grid-template-columns: 64px 64px 66px;
    gap: 6px;
    margin: 8px 0 5px;
    padding-left: 2px;
}

.attributes .select {
    width: 100%;
    height: 20px;
    padding: 0 0 0 4px;
    background-position: right 5px center;
    font-size: 11px;
}

.attributes ul {
    height: 87px;
    margin-top: 1px;
    overflow: hidden;
    background: linear-gradient(#f2f4f5 30px, #414346 30px) no-repeat right top / 6px 100%;
    font-weight: 700;
    font-size: 11px;
    line-height: 19px;
    color: #e4e5e6;
}

.attributes li {
    margin-right: 7px;
    padding-left: 2px;
    overflow: hidden;
    white-space: nowrap;
}

.media-body .files {
    position: relative;
    flex: 1;
    min-height: 0;
    overflow: hidden;
}

.files table {
    width: 100%;
    border-collapse: separate;
    border-spacing: 0;
    table-layout: fixed;
}

.files th {
    height: 19px;
    padding: 0 0 0 5px;
    border-bottom: 2px solid #24282b;
    background: #414346;
    text-align: left;
    font-weight: 400;
    font-size: 11px;
    line-height: 17px;
}

.files th svg {
    width: 6px;
    height: 6px;
    margin-right: 7px;
    fill: #77797b;
}

.files td {
    height: 19px;
    padding: 0 0 0 2px;
    border-bottom: 1px solid #34373a;
    font-weight: 700;
    font-size: 11px;
    line-height: 18px;
    color: #e4e5e6;
}

.files td .icon {
    display: inline-block;
    width: 15px;
    height: 15px;
    margin-right: 9px;
    vertical-align: -3px;
}

.files .current td {
    background: #aeafb0;
    color: #101214;
}

.files tbody {
    background: linear-gradient(#414346, #414346) no-repeat right top / 6px 100%;
}

.files-thumb {
    position: absolute;
    right: 0;
    top: 281px;
    width: 6px;
    height: 29px;
    border-radius: 3px;
    background: #f2f4f5;
}

.files-scroll {
    height: 6px;
    margin: 2px 9px 5px 1px;
    border-radius: 3px;
    background: #414346;
}

.files-scroll i {
    display: block;
    width: 78px;
    height: 6px;
    border-radius: 3px;
    background: #f2f4f5;
}

.preview {
    height: 74px;
    margin-bottom: 10px;
    padding: 4px 5px;
    border-radius: 4px;
    background: #17191b;
    color: #bfc1c3;
    font-size: 10px;
}

.preview svg {
    display: block;
    width: 100%;
    height: 46px;
}

.preview-scale {
    display: flex;
    justify-content: space-between;
    margin-top: -16px;
    padding-left: 5px;
}

.preview-name {
    margin-top: 2px;
    padding-right: 4px;
    text-align: right;
    font-size: 11px;
}

.preview-controls {
    height: 20px;
    display: flex;
    justify-content: space-between;
    padding: 0 5px;
}

.preview-controls + .preview-controls {
    margin-top: 11px;
}

.volume {
    width: 70px;
    display: flex;
    align-items: center;
    gap: 5px;
    padding-left: 3px;
    border: 1px solid #5a5c5f;
    border-radius: 2px;
    background: #1a1c1e;
}

.volume input {
    width: 44px;
    height: 10px;
    background: linear-gradient(90deg, #62a9e0 32px, #3a3c3e 32px) no-repeat center / 100% 5px;
}

.pair, .rates {
    display: grid;
    align-items: center;
    justify-items: center;
    border: 1px solid #5a5c5f;
    border-radius: 2px;
    font-size: 11px;
}

.pair {
    width: 63px;
    grid-template-columns: 25px 20px 16px;
    background: #1a1c1e;
}

.rates {
    width: 100px;
    grid-template-columns: repeat(4, 1fr);
    background: #3c3e41;
    color: #707274;
}

.rates .icon {
    color: #d0d1d2;
}

.dim {
    color: #606264;
}

/* Transport */
.transport {
    flex: none;
    height: 40px;
    display: flex;
    justify-content: space-between;
    align-items: center;
    padding: 0 4px;
    background: #25292c;
}

.t-left, .t-center, .t-right {
    display: flex;
    align-items: center;
    gap: 4px;
}

.t-left > .group:first-child {
    margin-right: 1px;
}

.t-center {
    gap: 5px;
    margin-left: 10px;
}

.combo {
    width: 43px;
}

.combo .btn {
    box-shadow: none;
    background: none;
}

.palette .btn, .eye .btn {
    background: none;
}

.dots {
    width: 3px;
    height: 13px;
    background: repeating-linear-gradient(#c6c8ca 0 3px, transparent 3px 5px);
}

.t-left .dots {
    margin: 0 3px 0 -2px;
}

.aq {
    margin-left: 10px;
}

.aq .btn {
    width: 32px;
}

output {
    height: 25px;
    display: block;
    padding-right: 7px;
    background: #17191b;
    box-shadow: inset 0 0 0 1px #55575a;
    text-align: right;
    font-family: "Open Sans", sans-serif;
    font-size: 14px;
    line-height: 26px;
    white-space: pre;
}

.locator output {
    width: 125px;
}

.locator + .locator {
    margin-left: 5px;
}

.deck {
    height: 32px;
    display: flex;
    border: 2px solid #b4b6b8;
    border-radius: 3px;
    background: #6a6c6e;
    color: #e4e6e8;
}

.deck button {
    width: 50px;
    display: flex;
    align-items: center;
    justify-content: center;
}

.deck .skip {
    width: 37px;
}

.deck .playing {
    background: #38d838;
    color: #0a4a0a;
}

.deck + .dots {
    margin: 0 1px 0 -3px;
}

.precount .btn {
    width: 38px;
    color: #808284;
}

.position output {
    width: 125px;
}

.position + .dots {
    margin: 0 -1px 0 -3px;
}

.tempo {
    width: 81px;
    height: 25px;
    display: flex;
    align-items: center;
    justify-content: space-between;
    padding: 0 8px 0 12px;
    border: 1px solid #55575a;
    border-left: 0;
}

.tempo input {
    width: 50px;
}

.tempo svg {
    width: 8px;
    height: 16px;
    fill: #d0d1d2;
}

.signature {
    width: 51px;
    text-align: center;
}

.btn.tap {
    width: 50px;
    background: #47484b;
}

.outmeter {
    width: 88px;
    height: 25px;
    border-radius: 3px;
    background: #17191b;
    outline: 1px solid #55575a;
    outline-offset: -1px;
}
```
FILE: script.js
```js
const icon = (name, cls = '') => `<svg class="icon ${cls}"><use href="#i-${name}"/></svg>`;

// ---- Tracks ----
const tracks = [
    { name: 'HALion Sonic 01', type: 'piano', strip: true, level: [17, 16] },
    { name: 'HALion Sonic 01 (D)', type: 'piano', level: [22, 22] },
    { name: 'Audio 01', type: 'wave', solo: true, level: [1, 1] },
    { name: 'PK_3_Crash1_v2-03', type: 'wave', selected: true, level: [5, 5] },
    { name: 'HALion Sonic 02', type: 'piano', strip: true, level: [18, 16] },
    { name: 'HALion Sonic 02 (D)', type: 'piano', level: [19, 18] },
    { name: 'ABPL2 01', type: 'piano', level: [17, 17] },
    { name: 'HALion Sonic 03', type: 'piano', strip: true, level: [3, 2] }
];

document.getElementById('tracks').innerHTML = tracks.map((t, i) => `
    <div class="track ${t.selected ? 'selected' : ''}">
        <div class="track-id">${icon(t.type)}<span>${i + 1}</span></div>
        <div class="strip ${t.strip ? '' : 'none'}"></div>
        <div class="track-main">
            <div class="track-row">
                <div class="ms"><button class="${t.solo ? '' : 'yellow'}">M</button><button class="${t.solo ? 'red' : ''}">S</button></div>
                <span class="track-name">${t.name}</span>
            </div>
            <div class="track-row">
                <div class="ms wide"><button class="${t.selected ? 'record' : ''}" aria-label="録音可能">${icon('rec', 'tiny')}</button><button aria-label="モニター">${icon('speaker', 'tiny')}</button></div>
                <div class="ms wide edit"><button aria-label="編集">${icon('e', 'tiny')}</button>${t.type === 'piano' ? `<button aria-label="インストゥルメント">${icon('piano', 'tiny')}</button>` : ''}</div>
            </div>
        </div>
        <div class="track-meter">${t.level.map(h => `<i style="height:${h}px"></i>`).join('')}</div>
    </div>`).join('');

// ---- Arrange ----
const BAR = 36.375;
const barX = bar => Math.round(7 + (bar - 1) * BAR);

let seed = 7;
function random() {
    seed = (seed * 16807) % 2147483647;
    return seed / 2147483647;
}

// note: [x, y, width, height]
function notes(width, list) {
    const path = list.map(([x, y, w, h = 6]) => `M${x} ${y}h${w}v${h}h-${w}z`).join('');
    return `<svg viewBox="0 0 ${width} 122" preserveAspectRatio="none"><path d="${path}" fill="#55575a"/></svg>`;
}

const chordsA = notes(358, [[100, 59, 12], [122, 59, 34], [178, 53, 52], [230, 32, 40], [230, 43, 105, 7], [278, 57, 13, 28], [293, 57, 42, 6], [293, 68, 42, 6], [293, 80, 42, 6]]);
const chordsB = notes(358, [[4, 64, 82], [96, 55, 14], [96, 68, 14], [96, 88, 14], [120, 55, 36, 7], [120, 68, 36, 7], [120, 88, 36, 7], [228, 46, 126, 7], [178, 64, 176, 6], [178, 80, 88, 6], [266, 88, 88, 6], [266, 100, 88, 6]]);
const chordsC = notes(90, [[4, 34, 84, 6], [4, 46, 84, 6], [4, 64, 84, 6]]);
const melody = notes(380, [[2, 90, 20], [46, 90, 24], [22, 54, 24], [22, 63, 24], [68, 54, 26], [68, 63, 26], [115, 54, 24], [92, 79, 26], [142, 79, 22], [165, 54, 24], [188, 73, 25], [238, 73, 23], [260, 30, 24, 9], [260, 45, 24], [284, 90, 24], [330, 90, 24], [307, 46, 24, 8], [307, 63, 24], [353, 46, 24, 8], [353, 63, 24]]);
const melodyEnd = notes(380, [[2, 90, 20], [46, 90, 24], [22, 54, 24], [22, 63, 24], [68, 54, 26], [68, 63, 26], [115, 54, 24], [92, 79, 26], [142, 79, 22], [165, 54, 24], [188, 73, 25], [238, 73, 23], [260, 30, 24, 9], [260, 45, 24], [284, 90, 24], [307, 46, 70, 9], [307, 63, 70]]);
const dots = notes(352, [[18, 58, 8], [108, 58, 8], [142, 58, 5], [164, 58, 5], [178, 58, 5], [200, 58, 5], [276, 50, 5], [288, 58, 5], [300, 30, 5], [311, 50, 5], [332, 87, 7]]);
const bass = notes(358, [[5, 65, 20], [44, 65, 14], [66, 65, 10], [150, 36, 6], [90, 89, 22], [132, 89, 16], [155, 89, 22], [178, 80, 22], [225, 80, 14], [242, 80, 26], [200, 26, 20], [239, 26, 5], [289, 11, 15], [268, 65, 22], [304, 65, 8]]);
const bassB = notes(358, [[5, 65, 20], [44, 65, 14], [62, 65, 14], [150, 36, 6], [90, 89, 22], [132, 89, 16], [155, 89, 22], [178, 80, 22], [225, 80, 14], [242, 80, 26], [200, 26, 20], [239, 26, 5], [280, 11, 15], [300, 11, 16], [340, 11, 14], [268, 65, 14], [296, 65, 14], [326, 65, 12]]);
const bassLong = notes(380, [[2, 65, 90], [155, 44, 34], [189, 35, 94], [283, 65, 94]]);

const contour = [0, 58, 25, 68, 50, 65, 65, 58, 78, 68, 115, 73, 145, 68, 155, 61, 175, 68, 190, 60, 210, 65, 230, 55, 245, 49, 265, 40, 285, 38, 305, 48, 325, 66, 345, 58, 375, 60, 390, 68, 410, 56, 420, 53, 435, 60, 455, 68, 485, 73, 505, 65, 515, 61, 535, 68, 545, 63, 560, 65, 575, 56, 600, 50, 615, 40, 630, 36, 655, 46, 680, 58, 705, 73, 715, 68, 800];
function contourNotes() {
    const list = [];
    for (let i = 0; i + 2 < contour.length; i += 2) {
        list.push([contour[i] + 3, contour[i + 1] - 4, contour[i + 2] - contour[i] + 2, 8]);
    }
    return notes(803, list);
}

function drumNotes() {
    let path = '';
    for (let x = 2; x < 722; x += 11 + Math.floor(random() * 3) * 5) {
        if (x > 315 && x < 352) continue;
        path += `M${x - 10} 64l10-15 10 15-10 15z`;
    }
    return `<svg viewBox="0 0 803 122" preserveAspectRatio="none"><path d="${path}" fill="#5a5c5e"/></svg>`;
}

function audioWave() {
    let top = '';
    let markers = '';
    for (let x = 134; x < 374; x++) {
        const cut = random() > 0.85 ? random() * 8 : random() * 1.5;
        top += `M${x} ${cut.toFixed(1)}V${(19 - cut / 2).toFixed(1)}`;
    }
    for (let x = 106; x < 376; x += 3 + Math.floor(random() * 3) * 3) {
        markers += `M${x}.5 4V36`;
    }
    return `<svg viewBox="0 0 412 39" preserveAspectRatio="none">
        <path d="${top}M106 18.500H134" stroke="#a2a4a6" stroke-width="1.300"/>
        <path d="M373 2l4 7 6 1h29v1h-29l-6 1-4 7z" fill="#a2a4a6"/>
        <path d="${markers}M29.500 4V36M398.500 4V36M402.500 4V36" stroke="#7c7e96" stroke-dasharray="1 2"/>
        <path d="M0 30.500H412" stroke="#b0b0c4"/><path d="M13 33h9v-6z" fill="#dcdcec"/>
    </svg>`;
}

const crashWave = `<svg viewBox="0 0 126 41" preserveAspectRatio="none"><path d="M2 40V20l2-8M0 31h126" stroke="#333" fill="none"/><path d="M1 40l3-28" stroke="#fff" stroke-width="2"/><path d="M60 31l30-1 34-5v12l-34-5z" fill="#3c3e40"/><path d="M108 5l6 3-6 3zM116 5l6 3-6 3z" fill="#505254"/></svg>`;

const clips = [
    { row: 0, from: 5, to: 9, name: 'HALion Sonic 01', art: chordsA },
    { row: 0, from: 9, to: 13, name: 'HALion Sonic 01', art: chordsB },
    { row: 0, from: 13, to: 14, art: chordsC },
    { row: 0, from: 15, to: 19, name: 'HALion Sonic 01', art: melody },
    { row: 0, from: 19, to: 23, name: 'HALion Sonic 01', art: melodyEnd },
    { row: 1, from: 1, to: 5, name: 'HALion Sonic 01 (D)', art: dots },
    { row: 2, from: 5, to: 16.35, name: 'PK_3_Crash1_v2-03_02', art: audioWave(), cls: 'audio' },
    { row: 3, from: 1.25, to: 4.73, name: 'PK_3_Crash1_v2-0', art: crashWave, gain: '-6.14 dB' },
    { row: 4, from: 5, to: 14, name: 'HALion Sonic 02', art: contourNotes() },
    { row: 4, from: 15, to: 19, name: 'HALion Sonic 02', art: '' },
    { row: 5, from: 5, to: 14, name: 'HALion Sonic 02', art: contourNotes() },
    { row: 6, from: 5, to: 9, name: 'ABPL2 01', art: bass },
    { row: 6, from: 9, to: 13, name: 'ABPL2 01', art: bassB },
    { row: 6, from: 13, to: 14, name: 'ABPL2 01', art: '' },
    { row: 6, from: 15, to: 19, name: 'ABPL2 01', art: bassLong },
    { row: 6, from: 19, to: 23, name: 'ABPL2 01', art: bassLong },
    { row: 7, from: 5, to: 14, name: 'HALion Sonic 03', art: drumNotes() }
];

let lines = '';
for (let bar = 1; bar <= 29; bar++) {
    lines += `<path d="M${barX(bar)}.5 0V400" stroke="${bar % 2 ? '#55595b' : '#3f4346'}"/>`;
}
for (let row = 0; row < 8; row++) {
    lines += `<path d="M0 ${19 + row * 46}.5H4000" stroke="#383c3f"/>`;
}

document.getElementById('canvas').innerHTML = `<svg class="grid">${lines}</svg>` + clips.map(c => `
    <div class="clip ${c.cls || ''}" style="left:${barX(c.from)}px;top:${22 + c.row * 46}px;width:${barX(c.to) - barX(c.from)}px">
        ${c.art}${c.name ? `<b>${c.name}</b>` : ''}${c.gain ? `<em>${c.gain}</em>` : ''}
    </div>`).join('');

let marks = '';
for (let bar = 1; bar <= 29; bar += 2) {
    marks += `<span style="left:${barX(bar)}px">${bar}</span>`;
}
document.getElementById('ruler').innerHTML = marks + '<i class="locator-flag"></i>';

// ---- Sample editor ----
marks = '';
for (let i = 0; i < 35; i++) {
    marks += `<span style="left:${Math.round(i * 44.34)}px">${1 + i * 16}</span>`;
}
document.getElementById('editor-ruler').innerHTML = marks + '<i class="locator-flag"></i>';

let wave = '';
for (let x = 7; x < 28; x++) {
    const up = 28 + random() * 16 + (x > 12 && x < 24 ? 4 : 0);
    const down = x < 9 ? 62 : 20 + random() * 28;
    wave += `M${x}.5 ${(76 - up).toFixed(1)}V${(76 + down).toFixed(1)}`;
}
document.getElementById('event').innerHTML = `<svg viewBox="0 0 31 306" preserveAspectRatio="none">
    <path d="${wave}" stroke="#858688" stroke-width="1.100"/>
    <path d="M0 76.500h31M0 229.500h31" stroke="#66686a"/><path d="M0 153h31" stroke="#000"/></svg>`;

// ---- Media files ----
const files = ['3_HHO_v3', '3_HHO_v2', '3_HHO_v1', '3_HHF_v2', '3_HHF_v1', '3_HHC_v3', '3_HHC_v2', '3_HHC_v1',
    '3_CrossStick_v2', '3_CrossStick_v1', '3_Crash3_v2', '3_Crash3_v1', '3_Crash2_v2', '3_Crash2_v1', '3_Crash1_v2', '3_Crash1_v1',
    '2_Tom3_v3', '2_Tom3_v2', '2_Tom3_v1', '2_Tom2_v3', '2_Tom2_v2', '2_Tom2_v1', '2_Tom1_v3', '2_Tom1_v2'];

document.getElementById('files').innerHTML = files.map(f =>
    `<tr class="${f === '3_Crash1_v2' ? 'current' : ''}"><td>${icon('wave')}PK_${f}</td></tr>`).join('');
```
